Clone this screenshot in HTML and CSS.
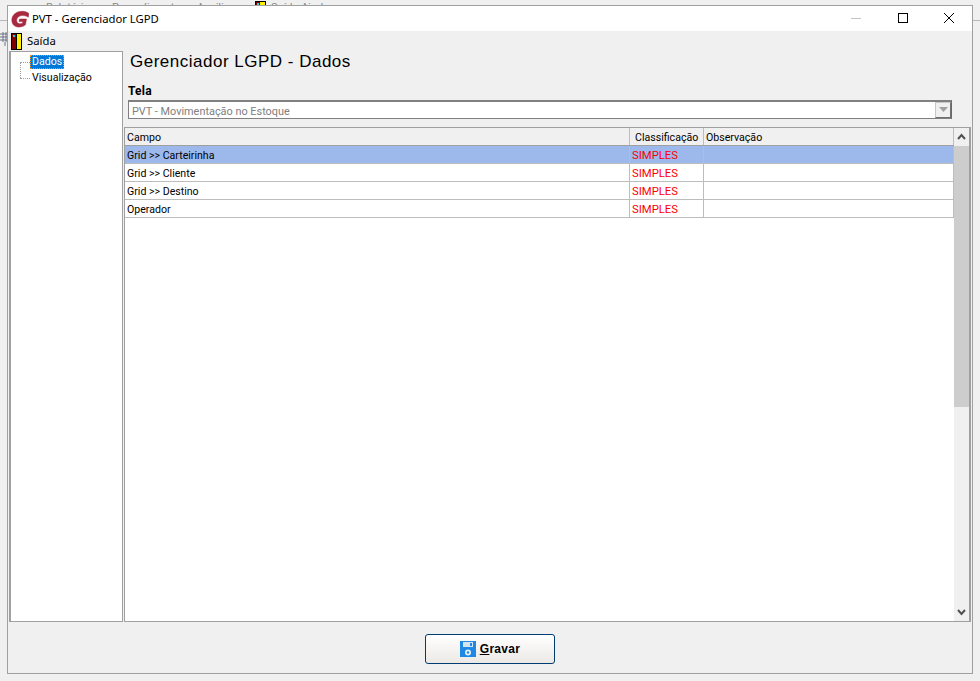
FILE: index.html
```html
<!DOCTYPE html>
<html lang="pt">
<head>
<meta charset="utf-8">
<title>PVT - Gerenciador LGPD</title>
<link rel="stylesheet" href="styles.css">
</head>
<body>
<div class="desktop">
  <div class="behind-rule"></div>
  <div class="behind-menu">
    <span class="behind-text m1">Relatórios</span><span class="behind-text m2">Procedimentos</span><span class="behind-text m3">Auxiliar</span>
    <svg class="behind-icon" width="11" height="16" viewBox="0 0 11 16"><rect x=".5" y=".5" width="10" height="15" fill="#ffef00" stroke="#000"/><rect x="1" y="1" width="4" height="14" fill="#800000"/><path d="M2 2h2v2H2z" fill="#19d3e0"/></svg>
    <span class="behind-text m4">Saída Ajuda</span>
  </div>
  <svg class="behind-tool" width="9" height="14" viewBox="0 0 9 14"><path d="M0 2h9M0 5h9M0 8h9M3 0v10M6 0v10M5 10v4" stroke="#6b7280" fill="none"/></svg>
  <div class="window">
    <header class="titlebar">
      <svg class="logo" width="18" height="18" viewBox="0 0 18 18"><path d="M13.500 1.500C7 .5 1 4 .8 10c-.1 4.800 3.700 7.500 8 7 2.500-.3 4.500-1.300 5.700-2.300l1-5.700H8.500L8 11.500h3.800l-.3 1.700c-3 1.200-6 .2-5.800-3C5.900 6.500 10 4.800 14 5.800c1.300.3 2.500.8 3.300 1.400L18 3.600c-1-.9-2.800-1.700-4.500-2.100z" fill="#a82a3f" stroke="#a82a3f" stroke-width=".5"/></svg>
      <span class="title">PVT - Gerenciador LGPD</span>
      <div class="controls">
        <svg class="ctl" width="46" height="25" viewBox="0 0 46 25"><path d="M17 12.500h10" stroke="#c4c4c4"/></svg>
        <svg class="ctl" width="46" height="25" viewBox="0 0 46 25"><rect x="18.500" y="7.500" width="9" height="9" fill="none" stroke="#000"/></svg>
        <svg class="ctl" width="46" height="25" viewBox="0 0 46 25"><path d="M18 7l10 10M28 7L18 17" stroke="#000" fill="none"/></svg>
      </div>
    </header>
    <nav class="menubar">
      <svg class="exit" width="11" height="17" viewBox="0 0 11 17"><rect width="11" height="17" fill="#000"/><rect x="1" y="1" width="4" height="15" fill="#800000"/><path d="M5 1h5v15H5z" fill="#ffef00"/><path d="M2 2h2v2H2z" fill="#19d3e0"/><path d="M5 1h1v15H5z" fill="#000"/></svg>
      <span class="menu-item">Saída</span>
    </nav>
    <div class="workspace">
      <aside class="tree">
        <div class="node first"><span class="branch"></span><span class="label selected">Dados</span></div>
        <div class="node second"><span class="branch"></span><span class="label">Visualização</span></div>
      </aside>
      <main class="content">
        <h1 class="heading">Gerenciador LGPD - Dados</h1>
        <label class="field-label">Tela</label>
        <div class="combo">
          <span class="combo-text">PVT - Movimentação no Estoque</span>
          <span class="combo-btn"><svg width="9" height="6" viewBox="0 0 9 6"><path d="M0 0h9L4.500 5z" fill="#a0a0a0"/></svg></span>
        </div>
        <div class="grid">
          <div class="grid-body">
            <div class="row head"><div class="c c1">Campo</div><div class="c c2 center">Classificação</div><div class="c c3">Observação</div></div>
            <div class="row sel"><div class="c c1">Grid &gt;&gt; Carteirinha</div><div class="c c2 red">SIMPLES</div><div class="c c3"></div></div>
            <div class="row"><div class="c c1">Grid &gt;&gt; Cliente</div><div class="c c2 red">SIMPLES</div><div class="c c3"></div></div>
            <div class="row"><div class="c c1">Grid &gt;&gt; Destino</div><div class="c c2 red">SIMPLES</div><div class="c c3"></div></div>
            <div class="row"><div class="c c1">Operador</div><div class="c c2 red">SIMPLES</div><div class="c c3"></div></div>
          </div>
          <div class="scrollbar">
            <svg class="arrow" width="15" height="18" viewBox="0 0 15 18"><path d="M4 11l3.500-4 3.500 4" fill="none" stroke="#505050" stroke-width="2"/></svg>
            <div class="thumb"></div>
            <div class="track"></div>
            <svg class="arrow" width="15" height="18" viewBox="0 0 15 18"><path d="M4 7l3.500 4 3.500-4" fill="none" stroke="#505050" stroke-width="2"/></svg>
          </div>
        </div>
      </main>
    </div>
    <footer class="footer">
      <button class="save" type="button">
        <svg width="16" height="16" viewBox="0 0 16 16"><path d="M0 0h16v16H0z" fill="#1e88e5"/><path d="M3 1h10v5H3z" fill="#d5e3ee"/><path d="M10 2h2v3h-2z" fill="#1e88e5"/><circle cx="8" cy="11.500" r="3" fill="#e8f1f8"/><circle cx="8" cy="11.500" r="1.200" fill="#1e88e5"/></svg>
        <span class="save-text"><u>G</u>ravar</span>
      </button>
    </footer>
  </div>
</div>
</body>
</html>
```

FILE: styles.css
```css
* { box-sizing: border-box; }
html, body { margin: 0; padding: 0; }
body { font-family: Roboto, "Noto Sans", "Liberation Sans", sans-serif; font-size: 10.6px; color: #000; }

.desktop { position: relative; width: 980px; height: 681px; overflow: hidden; background: #f0f0f0; }
.behind-rule { position: absolute; left: 0; right: 0; top: 20px; height: 1px; background: #b8b8b8; }
.behind-menu { position: absolute; left: 46px; top: 5px; height: 5px; display: flex; align-items: flex-start; color: #8a8a8a; font-size: 11px; line-height: 5px; white-space: nowrap; }
.m1 { width: 66px; }
.m2 { width: 85px; }
.m3 { width: 58px; }
.behind-icon { flex: none; margin-top: -4px; }
.m4 { margin-left: 5px; }
.behind-tool { position: absolute; left: 0; top: 32px; }

.window { position: absolute; left: 7px; top: 5px; width: 966px; height: 669px; background: #f0f0f0; border: 1px solid #a0a0a0; display: flex; flex-direction: column; }

.titlebar { height: 25px; flex: none; background: #fff; display: flex; align-items: center; padding-left: 3px; }
.logo { flex: none; }
.title { margin-left: 3px; font-size: 11.3px; font-family: "Noto Sans", sans-serif; flex: 1; }
.controls { display: flex; }
.ctl { display: block; }

.menubar { height: 20px; flex: none; display: flex; align-items: center; padding-left: 3px; }
.exit { flex: none; }
.menu-item { margin: -2px 0 0 5px; font-size: 11.3px; font-family: "Noto Sans", sans-serif; }

.workspace { flex: 1; min-height: 0; display: flex; padding: 0 1px; }

.tree { width: 114px; flex: none; background: #fff; border: 1px solid #a0a0a0; border-left-width: 2px; padding-top: 2px; }
.node { height: 16px; display: flex; align-items: center; white-space: nowrap; position: relative; }
.branch { width: 10px; margin-left: 9px; border-top: 1px dotted #a0a0a0; flex: none; }
.second::before { content: ""; position: absolute; left: 9px; top: -8px; height: 16px; border-left: 1px dotted #a0a0a0; }
.label { padding: 0 2px; line-height: 14px; }
.selected { background: #0078d7; color: #fff; outline: 1px dotted #ff8c1a; outline-offset: -1px; }

.content { flex: 1; min-width: 0; margin-left: 1px; padding-top: 1px; display: flex; flex-direction: column; }
.heading { margin: 0; padding-left: 6px; height: 20px; font-size: 17px; line-height: 20px; font-weight: 400; letter-spacing: .5px; font-family: "Liberation Sans", sans-serif; }
.field-label { margin: 11px 0 0 4px; height: 16px; line-height: 16px; font-weight: 700; font-size: 12px; letter-spacing: .2px; }
.combo { margin: 1px 0 0 4px; width: 824px; height: 19px; background: #fff; border: 1px solid #808080; border-top-width: 2px; border-right-color: #696969; display: flex; align-items: center; }
.combo-text { flex: 1; padding: 2px 0 0 3px; color: #808080; font-size: 10.9px; }
.combo-btn { width: 16px; height: 16px; background: #f0f0f0; border: 1px solid #c8c8c8; border-bottom-color: #707070; border-right-color: #707070; display: flex; align-items: center; justify-content: center; }

.grid { flex: 1; min-height: 0; margin-top: 8px; display: flex; background: #fff; border: 1px solid #a0a0a0; }
.grid-body { flex: 1; min-width: 0; }
.row { display: flex; height: 18px; border-bottom: 1px solid #bdbdbd; }
.row.head { background: #f0f0f0; border-bottom-color: #a0a0a0; }
.row.sel { background: #9db9eb; }
.c { line-height: 17px; padding: 1px 0 0 2px; white-space: nowrap; overflow: hidden; border-right: 1px solid #bdbdbd; }
.c1 { width: 505px; flex: none; }
.c2 { width: 74px; flex: none; }
.c3 { flex: 1; }
.center { padding-left: 5px; }
.red { color: #f00; font-size: 11.3px; }

.scrollbar { width: 16px; flex: none; display: flex; flex-direction: column; background: #f0f0f0; border-right: 1px solid #a0a0a0; }
.arrow { display: block; flex: none; }
.thumb { height: 261px; width: 15px; flex: none; background: #cdcdcd; }
.track { flex: 1; }

.footer { height: 51px; flex: none; display: flex; justify-content: center; align-items: flex-start; padding-top: 12px; }
.save { width: 130px; height: 30px; padding: 0; border: 1px solid #003c74; border-radius: 3px; background: linear-gradient(#ffffff, #ece9e5); display: flex; align-items: center; justify-content: center; gap: 4px; font-family: "Liberation Sans", sans-serif; font-size: 12px; font-weight: 700; letter-spacing: .3px; color: #000; }
.save-text { display: block; }
```
